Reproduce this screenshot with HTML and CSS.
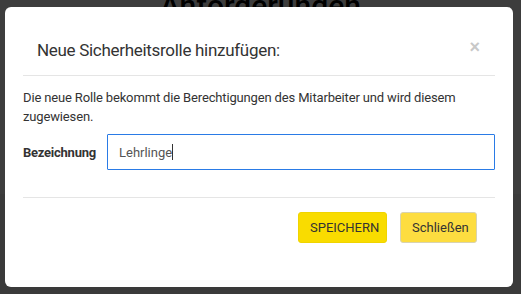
FILE: index.html
```html
<!DOCTYPE html>
<html lang="de">
<head>
    <meta charset="UTF-8">
    <meta name="viewport" content="width=device-width, initial-scale=1.0">
    <title>Anforderungen</title>
    <link rel="stylesheet" href="styles.css">
</head>
<body>
    <div class="page">
        <h1 class="page-title">Anforderungen</h1>
        <div class="page-band"></div>
    </div>

    <div class="overlay">
        <div class="modal">
            <div class="modal-header">
                <h2>Neue Sicherheitsrolle hinzufügen:</h2>
                <button class="close">&times;</button>
            </div>
            <div class="modal-body">
                <p>Die neue Rolle bekommt die Berechtigungen des Mitarbeiter und wird diesem zugewiesen.</p>
                <div class="field">
                    <label for="roleName">Bezeichnung</label>
                    <div class="input"><span>Lehrlinge</span><span class="caret"></span></div>
                </div>
            </div>
            <div class="modal-footer">
                <button class="btn btn-save">SPEICHERN</button>
                <button class="btn btn-close">Schließen</button>
            </div>
        </div>
    </div>
</body>
</html>
```

FILE: styles.css
```css
body {
    font-family: Roboto, "Liberation Sans", Arial, sans-serif;
    margin: 0;
    padding: 0;
    background-color: #f2f2f2;
    height: 294px;
    overflow: hidden;
}

.page {
    background: #ffffff;
    height: 206px;
}

.page-title {
    margin: 0;
    margin-top: -12px;
    text-align: center;
    font-size: 30px;
    font-weight: 500;
    color: #000;
}

.overlay {
    position: fixed;
    top: 0;
    left: 0;
    right: 0;
    bottom: 0;
    background: rgba(0, 0, 0, 0.76);
    padding: 7px 8px 0 5px;
}

.modal {
    background: white;
    border-radius: 6px;
    height: 280px;
    padding: 0 18px;
    box-sizing: border-box;
}

.modal-header {
    display: flex;
    justify-content: space-between;
    align-items: center;
    padding: 33px 15px 15px 14px;
    border-bottom: 1px solid #e5e5e5;
}

.modal-header h2 {
    margin: 0;
    font-size: 17px;
    line-height: 20px;
    font-weight: 400;
    letter-spacing: -0.3px;
    color: #333;
}

.close {
    background: none;
    border: none;
    padding: 0;
    font-size: 18px;
    line-height: 18px;
    font-weight: 700;
    color: #c8c8c8;
    margin-top: -6px;
}

.modal-body {
    padding-top: 12px;
}

.modal-body p {
    margin: 0;
    font-size: 13px;
    line-height: 19px;
    letter-spacing: -0.15px;
    color: #333;
}

.field {
    display: flex;
    align-items: center;
    margin-top: 8px;
    padding-bottom: 27px;
    border-bottom: 1px solid #e5e5e5;
}

.field label {
    width: 84px;
    font-size: 13px;
    font-weight: 700;
    letter-spacing: -0.25px;
    color: #333;
}

.input {
    flex: 1;
    height: 36px;
    box-sizing: border-box;
    border: 1px solid #2a7be6;
    border-radius: 1px;
    padding: 0 11px;
    display: flex;
    align-items: center;
    font-size: 13px;
    color: #555;
}

.caret {
    display: inline-block;
    width: 1px;
    height: 16px;
    background: #333;
}

.modal-footer {
    display: flex;
    justify-content: flex-end;
    gap: 13px;
    padding: 14px 18px 0 0;
}

.btn {
    height: 31px;
    padding: 0 11px;
    border-radius: 3px;
    font-family: inherit;
    font-size: 13px;
    color: #333;
    cursor: pointer;
}

.btn-save {
    background: #f9dc00;
    border: 1px solid #f0d400;
    width: 89px;
}

.btn-close {
    background: #fddd40;
    border: 1px solid #d9d3b0;
    width: 77px;
}
```
